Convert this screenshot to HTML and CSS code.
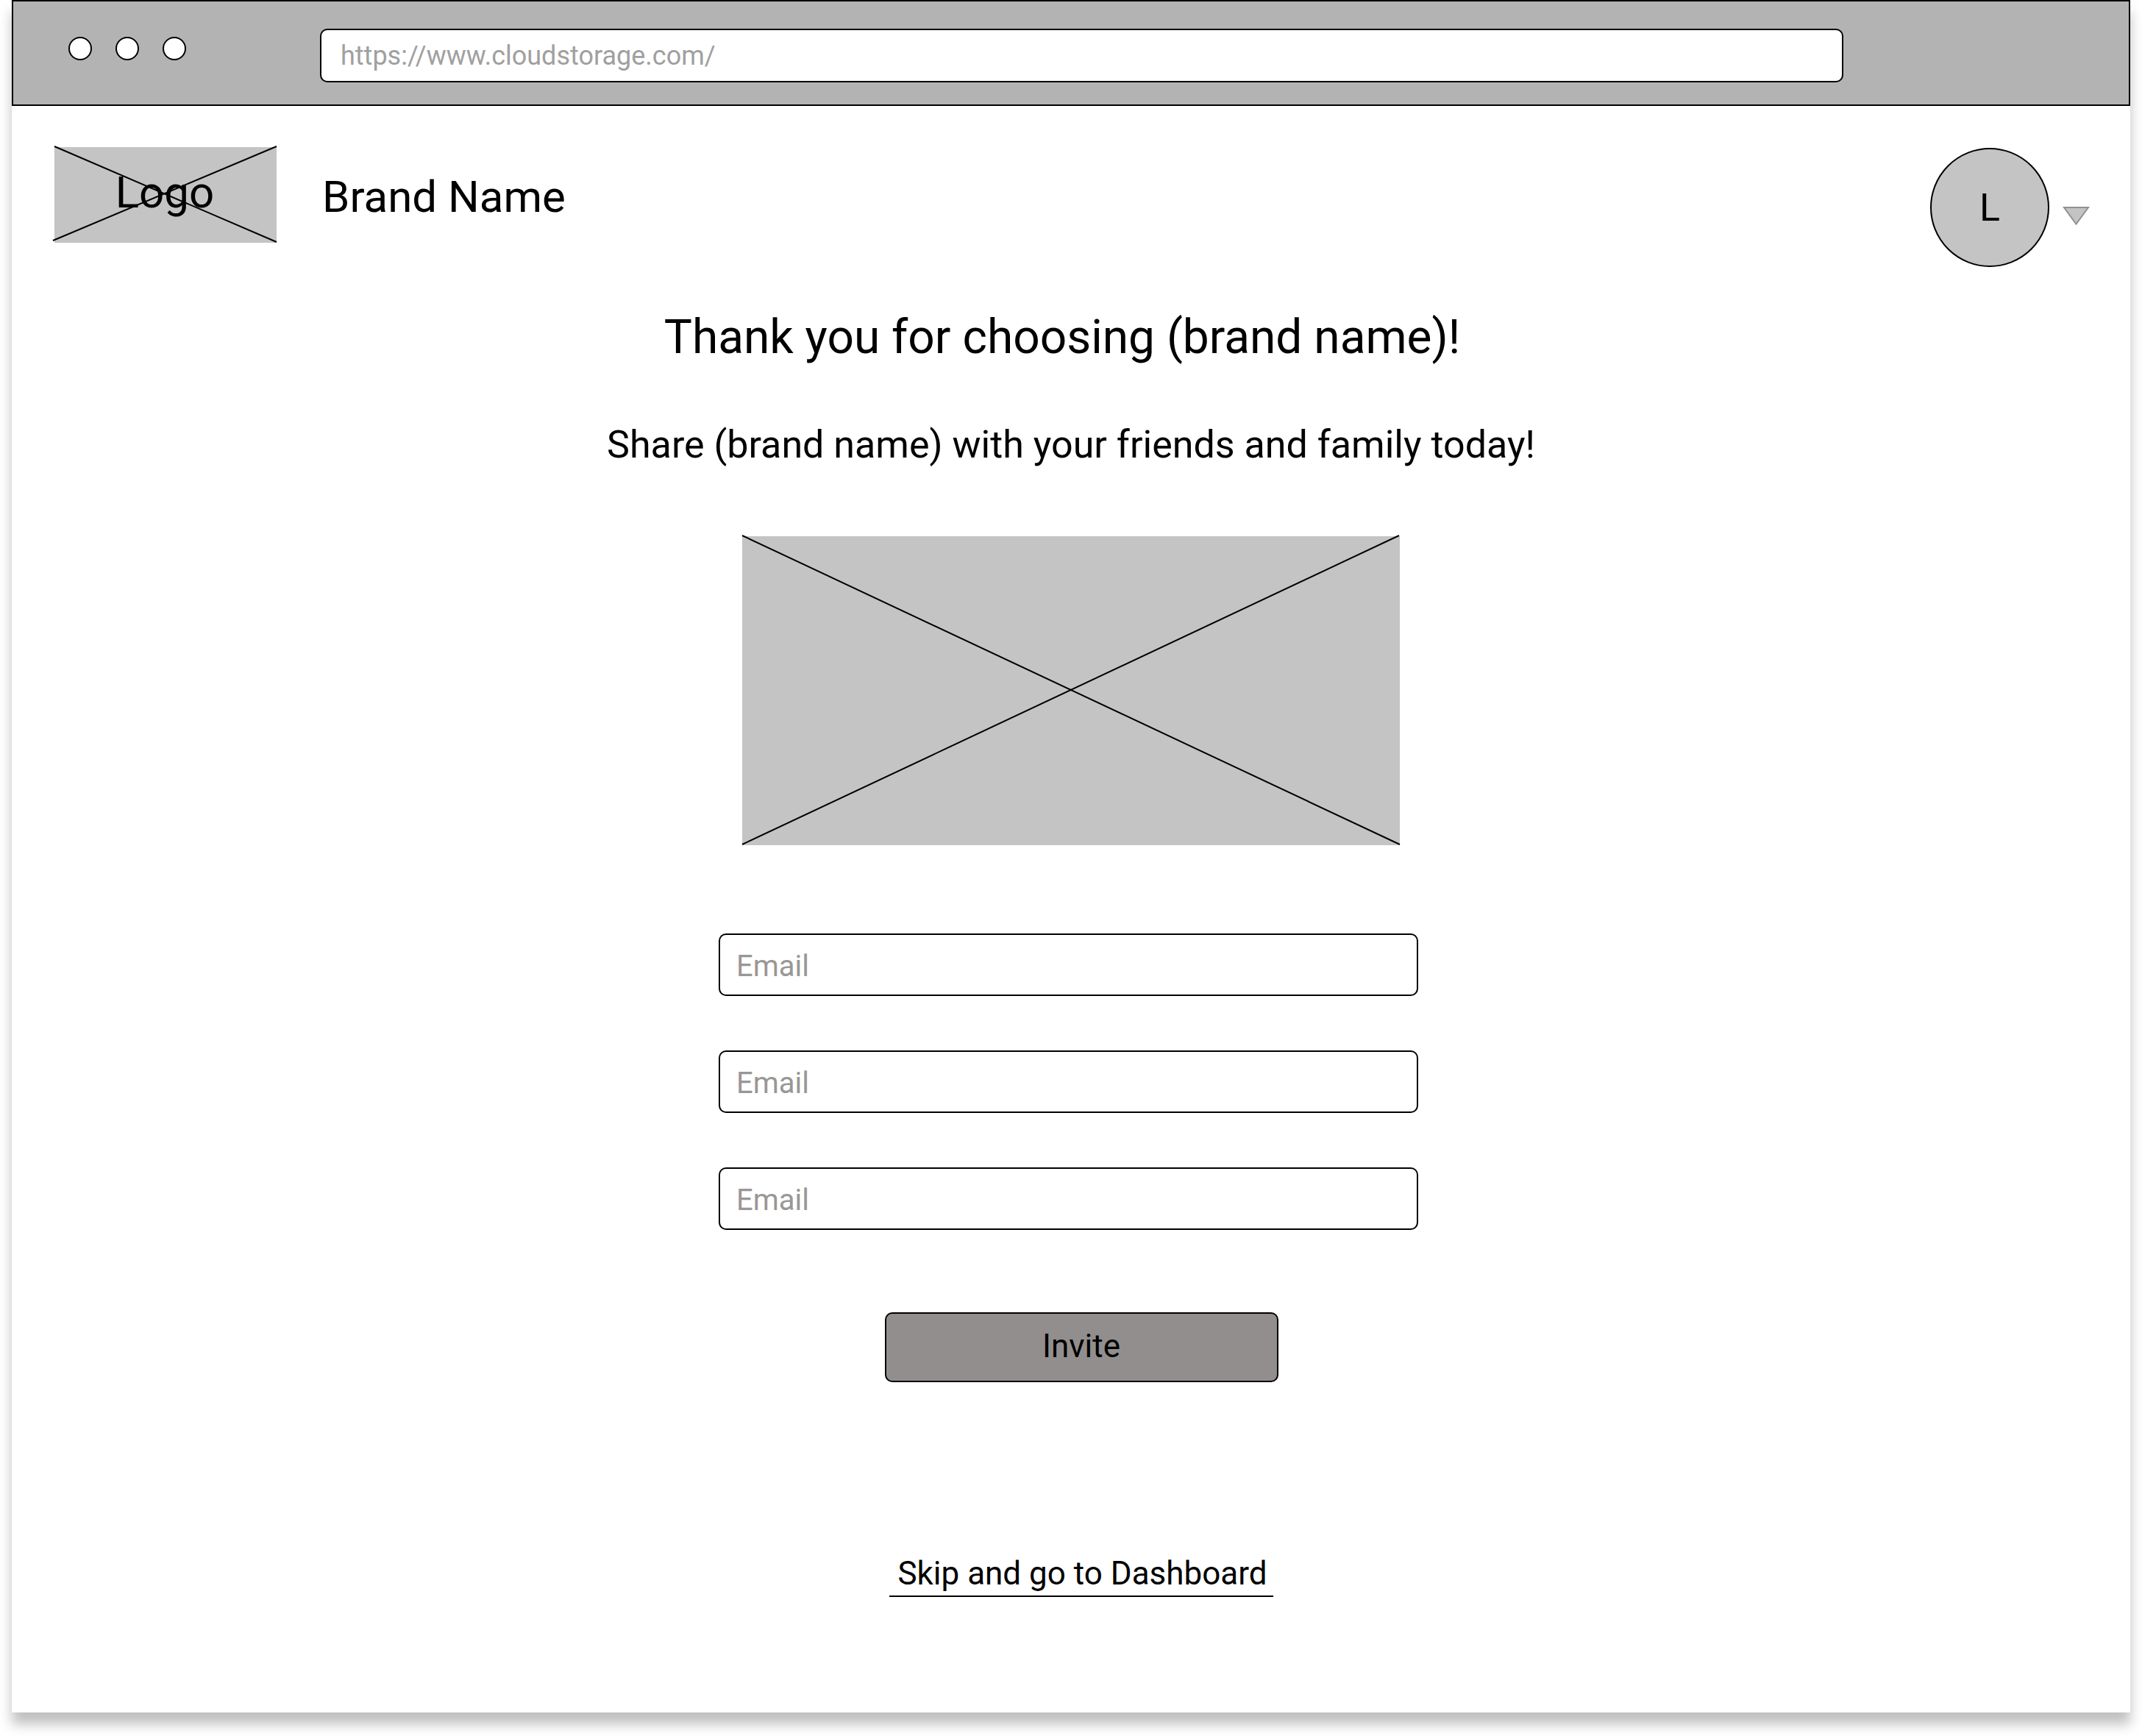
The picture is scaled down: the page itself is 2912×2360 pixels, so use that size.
FILE: index.html
```html
<!DOCTYPE html>
<html lang="en">
<head>
  <meta charset="utf-8">
  <meta name="viewport" content="width=device-width, initial-scale=1">
  <title>Invite friends</title>
  <link rel="stylesheet" href="styles.css">
</head>
<body>
  <div class="window">
    <div class="toolbar">
      <div class="dots">
        <span class="dot"></span>
        <span class="dot"></span>
        <span class="dot"></span>
      </div>
      <input class="address" type="url" aria-label="Address" placeholder="https://www.cloudstorage.com/">
    </div>

    <header class="header">
      <div class="brand">
        <div class="logo">
          <span class="logo-text">Logo</span>
          <svg class="cross" viewBox="0 0 302 130" preserveAspectRatio="none" aria-hidden="true">
            <path d="M0 -1L302 129M302 -1L-2 127"/>
          </svg>
        </div>
        <span class="brand-name">Brand Name</span>
      </div>
      <button class="account" type="button" aria-label="Account menu">
        <span class="avatar">L</span>
        <svg class="caret" width="37" height="26" viewBox="0 0 37 26" aria-hidden="true">
          <path d="M2 1H35L18.500 23.500Z"/>
        </svg>
      </button>
    </header>

    <main class="main">
      <h1 class="title">Thank you for choosing (brand name)!</h1>
      <p class="subtitle">Share (brand name) with your friends and family today!</p>
      <div class="picture">
        <svg class="cross" viewBox="0 0 894 420" preserveAspectRatio="none" aria-hidden="true">
          <path d="M0 -1L894 419M893 -1L0 419"/>
        </svg>
      </div>
      <form class="form">
        <div class="fields">
          <input class="field" type="email" aria-label="First email" placeholder="Email">
          <input class="field" type="email" aria-label="Second email" placeholder="Email">
          <input class="field" type="email" aria-label="Third email" placeholder="Email">
        </div>
        <div class="actions">
          <button class="invite" type="submit">Invite</button>
          <a class="skip" href="#dashboard">Skip and go to Dashboard</a>
        </div>
      </form>
    </main>
  </div>
</body>
</html>
```
FILE: styles.css
```css
*,
*::before,
*::after {
  box-sizing: border-box;
}

body {
  margin: 0;
  background: #fff;
  color: #000;
  font-family: Roboto, "Liberation Sans", sans-serif;
}

input,
button {
  font: inherit;
  color: inherit;
}

.window {
  min-height: calc(100vh - 32px);
  margin: 0 16px 32px;
  background: #fff;
  box-shadow: 0 16px 16px rgba(0, 0, 0, 0.25);
}

/* Browser bar */
.toolbar {
  display: flex;
  align-items: flex-start;
  gap: 182px;
  height: 144px;
  padding: 37px 388px 0 75px;
  border: 2px solid #000;
  background: #b3b3b3;
}

.dots {
  display: flex;
  gap: 32px;
  padding-top: 11px;
}

.dot {
  width: 32px;
  height: 32px;
  border: 2px solid #000;
  border-radius: 50%;
  background: #fff;
}

.address {
  flex: 1;
  min-width: 0;
  height: 73px;
  padding: 1px 26px 0;
  border: 2px solid #000;
  border-radius: 10px;
  background: #fff;
  font-size: 36px;
}

.address::placeholder {
  color: #a0a0a0;
  opacity: 1;
}

/* Site header */
.header {
  display: flex;
  justify-content: space-between;
  align-items: flex-end;
  padding: 56px 55px 0 58px;
}

.brand {
  display: flex;
  align-items: center;
  align-self: flex-start;
  gap: 62px;
}

.logo {
  position: relative;
  display: flex;
  align-items: center;
  justify-content: center;
  width: 302px;
  height: 130px;
  padding: 0 2px 8px 0;
  background: #c4c4c4;
  font-size: 60px;
}

.cross {
  position: absolute;
  inset: 0;
  width: 100%;
  height: 100%;
  overflow: visible;
  fill: none;
  stroke: #000;
  stroke-width: 2;
}

.brand-name {
  padding-top: 4px;
  font-size: 60px;
}

.account {
  display: flex;
  align-items: center;
  gap: 18px;
  padding: 1px 0 0;
  border: 0;
  background: none;
}

.avatar {
  display: flex;
  align-items: center;
  justify-content: center;
  width: 162px;
  height: 162px;
  border: 2px solid #000;
  border-radius: 50%;
  background: #c4c4c4;
  font-size: 52px;
}

.caret {
  margin-top: 24px;
  fill: #c4c4c4;
  stroke: #929090;
  stroke-width: 2;
}

/* Invitation */
.main {
  display: flex;
  flex-direction: column;
  align-items: center;
  padding: 58px 0 0;
}

.title {
  margin: 0;
  padding-right: 24px;
  font-size: 64px;
  font-weight: 400;
  line-height: 76px;
}

.subtitle {
  margin: 78px 0 94px;
  font-size: 52px;
  line-height: 60px;
}

.picture {
  position: relative;
  width: 894px;
  max-width: 100%;
  height: 420px;
  background: #c4c4c4;
}

.form {
  display: flex;
  flex-direction: column;
  align-items: center;
  margin-top: 120px;
}

.fields {
  display: flex;
  flex-direction: column;
  gap: 74px;
  width: 958px;
  max-width: 100%;
  padding-right: 7px;
}

.field {
  height: 85px;
  padding: 3px 22px 0;
  border: 2px solid #000;
  border-radius: 10px;
  background: #fff;
  font-size: 40px;
}

.field::placeholder {
  color: #999796;
  opacity: 1;
}

.actions {
  display: flex;
  flex-direction: column;
  align-items: center;
  gap: 234px;
  margin-top: 112px;
  padding-left: 28px;
  font-size: 44px;
}

.invite {
  width: 535px;
  height: 95px;
  padding: 0 0 4px;
  border: 2px solid #000;
  border-radius: 10px;
  background: #928e8d;
}

.skip {
  padding: 0 8px 4px 11px;
  border-bottom: 2px solid #000;
  color: inherit;
  line-height: 52px;
  text-decoration: none;
}
```
